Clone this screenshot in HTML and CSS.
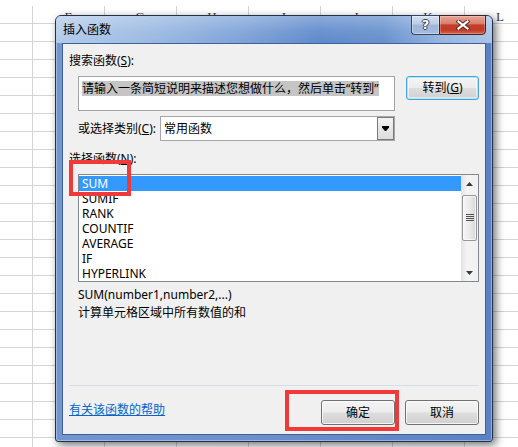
FILE: index.html
```html
<!DOCTYPE html>
<html lang="zh-CN">
<head>
<meta charset="utf-8">
<title>插入函数</title>
<link rel="stylesheet" href="styles.css">
</head>
<body>
<div class="sheet">
  <div class="col-head">
    <span>F</span><span>G</span><span>H</span><span>I</span><span>J</span><span>K</span><span>L</span>
  </div>
</div>

<div class="window">
  <div class="titlebar">
    <span class="title">插入函数</span>
    <div class="caption-btns">
      <div class="cap-help">?</div>
      <div class="cap-close">
        <svg width="14" height="10" viewBox="0 0 14 10"><path d="M2.5 1.5 L11.5 8.5 M11.5 1.5 L2.5 8.5" stroke="#4a2a22" stroke-width="4" stroke-linecap="square" fill="none"/><path d="M2.5 1.5 L11.5 8.5 M11.5 1.5 L2.5 8.5" stroke="#ffffff" stroke-width="2.2" stroke-linecap="square" fill="none"/></svg>
      </div>
    </div>
  </div>

  <div class="client">
    <div class="label first">搜索函数(<u>S</u>):</div>
    <div class="search-row">
      <div class="search-box"><span class="sel">请输入一条简短说明来描述您想做什么，然后单击“转到”</span></div>
      <button class="btn btn-default">转到(<u>G</u>)</button>
    </div>

    <div class="cat-row">
      <span class="cat-label">或选择类别(<u>C</u>):</span>
      <div class="combo">
        <span class="combo-text">常用函数</span>
        <span class="combo-btn"><svg width="7" height="5" viewBox="0 0 7 5"><path d="M0 0.5 H7 M0 1 L3.5 5 L7 1Z" fill="#000" stroke="#000" stroke-width="1"/></svg></span>
      </div>
    </div>

    <div class="label pick">选择函数(<u>N</u>):</div>
    <div class="listbox">
      <ul class="items">
        <li class="selected">SUM</li>
        <li>SUMIF</li>
        <li>RANK</li>
        <li>COUNTIF</li>
        <li>AVERAGE</li>
        <li>IF</li>
        <li>HYPERLINK</li>
      </ul>
      <div class="scrollbar">
        <div class="sb-arrow"><svg width="7" height="4" viewBox="0 0 7 4"><path d="M3.5 0 L7 4 L0 4Z" fill="#3a3a3a"/></svg></div>
        <div class="sb-track">
          <div class="sb-thumb"><svg width="8" height="8" viewBox="0 0 8 8"><path d="M0 0.5H8M0 2.5H8M0 4.5H8M0 6.5H8" stroke="#505050" stroke-width="1"/></svg></div>
        </div>
        <div class="sb-arrow"><svg width="7" height="4" viewBox="0 0 7 4"><path d="M0 0 L7 0 L3.5 4Z" fill="#3a3a3a"/></svg></div>
      </div>
    </div>

    <div class="syntax">SUM(number1,number2,...)</div>
    <div class="desc">计算单元格区域中所有数值的和</div>

    <div class="sep"></div>

    <div class="bottom-row">
      <a class="help-link" href="#">有关该函数的帮助</a>
      <div class="btns">
        <button class="btn">确定</button>
        <button class="btn">取消</button>
      </div>
    </div>
  </div>
</div>

<div class="mark mark-sum"></div>
<div class="mark mark-ok"></div>
</body>
</html>
```

FILE: styles.css
```css
* { box-sizing: border-box; }

html, body { margin: 0; padding: 0; }

body {
  width: 518px;
  height: 447px;
  overflow: hidden;
  position: relative;
  background: #ffffff;
  font-family: "Noto Sans", "Noto Sans CJK SC", sans-serif;
  font-size: 12px;
  color: #000;
}

/* spreadsheet behind the dialog */
.sheet {
  margin-top: 6px;
  height: 441px;
  background-image:
    linear-gradient(to right, #d4d4d4 0, #d4d4d4 1px, transparent 1px),
    linear-gradient(to bottom, #d4d4d4 0, #d4d4d4 1px, transparent 1px);
  background-size: 72px 100%, 100% 18px;
  background-position: 32px 0, 0 17px;
}

.col-head {
  display: flex;
  padding-left: 32px;
  padding-top: 2px;
  height: 17px;
  font-family: "Liberation Serif", serif;
  font-size: 13px;
  line-height: 17px;
  color: #3a3a3a;
}
.col-head span {
  flex: 0 0 72px;
  text-align: center;
}

/* dialog window */
.window {
  position: absolute;
  left: 55px;
  top: 15px;
  width: 438px;
  height: 427px;
  border: 1px solid #22304c;
  border-radius: 6px 6px 3px 3px;
  background: linear-gradient(to right, #7196d0 0%, #6a8fcb 50%, #5a82c2 100%);
  padding: 0 6px 6px;
  box-shadow: 3px 3px 9px rgba(0, 0, 0, .55), inset 0 0 0 1px rgba(255, 255, 255, .35);
  display: flex;
  flex-direction: column;
}

.titlebar {
  margin: 0 -6px;
  padding: 0 6px 0 7px;
  height: 27px;
  flex: 0 0 27px;
  border-radius: 5px 5px 0 0;
  display: flex;
  justify-content: space-between;
  align-items: flex-start;
  background:
    linear-gradient(to bottom, rgba(255,255,255,.28) 0, rgba(255,255,255,.08) 55%, rgba(255,255,255,0) 100%),
    linear-gradient(to right, #b3cbea 0%, #9ab9e2 22%, #7ea3d8 42%, #5f8acb 60%, #6690cd 75%, #94b4df 88%, #a9c3e6 100%);
}

.title {
  line-height: 27px;
  font-size: 12px;
  color: #000;
}

.caption-btns {
  display: flex;
  margin-top: -1px;
  height: 20px;
}

.cap-help {
  width: 28px;
  height: 20px;
  border: 1px solid #34466a;
  border-right: none;
  border-radius: 0 0 0 4px;
  background: linear-gradient(to bottom, #d3e0f1 0%, #bccde6 45%, #9fb6d9 50%, #a5bcdd 100%);
  box-shadow: inset 0 0 0 1px rgba(255,255,255,.35);
  color: #fff;
  font-family: "DejaVu Sans", sans-serif;
  font-weight: bold;
  font-size: 13px;
  line-height: 18px;
  text-align: center;
  text-shadow: 1px 0 0 #2e3f60, -1px 0 0 #2e3f60, 0 1px 0 #2e3f60, 0 -1px 0 #2e3f60;
}

.cap-close {
  width: 47px;
  height: 20px;
  border: 1px solid #3e2320;
  border-radius: 0 0 4px 0;
  background: linear-gradient(to bottom, #e8a597 0%, #d9806f 42%, #c43f2b 50%, #c23a25 78%, #d8654d 100%);
  box-shadow: inset 0 0 0 1px rgba(255,255,255,.25);
  display: flex;
  align-items: center;
  justify-content: center;
}

.client {
  flex: 1;
  background: #f0f0f0;
  border: 1px solid #41609a;
  padding: 0 6px;
  display: flex;
  flex-direction: column;
}

.label {
  height: 16px;
  line-height: 16px;
}
.label.first { margin-top: 9px; }
.label.pick { margin-top: 10px; }

.search-row {
  margin-top: 7px;
  padding-left: 9px;
  display: flex;
  align-items: flex-start;
  gap: 11px;
}

.search-box {
  width: 317px;
  height: 35px;
  background: #fff;
  border: 1px solid #a3a3a3;
  padding: 3px 0 0 3px;
}
.sel {
  display: inline-block;
  height: 15px;
  line-height: 15px;
  background: #c5c5c5;
  white-space: nowrap;
}

.btn {
  font: inherit;
  color: #000;
  width: 74px;
  height: 25px;
  padding: 0;
  border: 1px solid #707070;
  border-radius: 3px;
  background: linear-gradient(to bottom, #f4f4f4 0%, #ececec 48%, #dddddd 52%, #d0d0d0 100%);
  box-shadow: inset 0 0 0 1px rgba(255,255,255,.75);
  line-height: 21px;
  text-align: center;
}
.btn-default {
  width: 73px;
  height: 24px;
  border-color: #4aa3d8;
  box-shadow: inset 0 0 0 1px #aee3f8, inset 0 0 0 2px rgba(255,255,255,.5);
  line-height: 20px;
}

.cat-row {
  margin-top: 5px;
  padding-left: 9px;
  height: 25px;
  display: flex;
  align-items: center;
}
.cat-label {
  flex: 0 0 82px;
  line-height: 16px;
}
.combo {
  width: 235px;
  height: 25px;
  background: #fff;
  border: 1px solid #a6a6a6;
  display: flex;
  align-items: center;
  justify-content: space-between;
  padding-left: 3px;
}
.combo-text { line-height: 16px; }
.combo-btn {
  width: 17px;
  height: 23px;
  border: 1px solid #7a7a7a;
  background: linear-gradient(to bottom, #f2f2f2, #dcdcdc);
  display: flex;
  align-items: center;
  justify-content: center;
}

.listbox {
  margin-top: 7px;
  margin-left: 9px;
  width: 401px;
  height: 108px;
  background: #fff;
  border: 1px solid #828790;
  display: flex;
}
.items {
  list-style: none;
  margin: 0;
  padding: 1px 0 0;
  flex: 1;
}
.items li {
  height: 15px;
  line-height: 15px;
  padding-left: 3px;
}
.items li.selected {
  background: #3399ff;
  color: #fff;
}

.scrollbar {
  width: 17px;
  display: flex;
  flex-direction: column;
  background: linear-gradient(to right, #e3e3e3 0%, #f4f4f4 35%, #f1f1f1 100%);
}
.sb-arrow {
  height: 17px;
  display: flex;
  align-items: center;
  justify-content: center;
}
.sb-track {
  flex: 1;
  padding-top: 3px;
}
.sb-thumb {
  margin: 0 1px;
  height: 46px;
  border: 1px solid #979797;
  border-radius: 2px;
  background: linear-gradient(to right, #f6f6f6 0%, #ececec 45%, #d8d8d8 100%);
  box-shadow: inset 0 0 0 1px rgba(255,255,255,.6);
  display: flex;
  align-items: center;
  justify-content: center;
}

.syntax {
  margin-top: 5px;
  margin-left: 9px;
  height: 16px;
  line-height: 16px;
}
.desc {
  margin-top: 2px;
  margin-left: 9px;
  height: 16px;
  line-height: 16px;
}

.sep {
  margin-top: 64px;
  height: 1px;
  background: #d5dde6;
}

.bottom-row {
  margin-top: 14px;
  height: 25px;
  display: flex;
  justify-content: space-between;
  align-items: flex-start;
}
.help-link {
  margin-top: 2px;
  line-height: 16px;
  color: #0066cc;
  text-decoration: underline;
}
.btns {
  display: flex;
  gap: 10px;
}

/* red annotation boxes */
.mark {
  position: absolute;
  border: 4px solid #f03a3a;
}
.mark-sum {
  left: 69px;
  top: 160px;
  width: 62px;
  height: 36px;
}
.mark-ok {
  left: 285px;
  top: 390px;
  width: 114px;
  height: 41px;
}
```
